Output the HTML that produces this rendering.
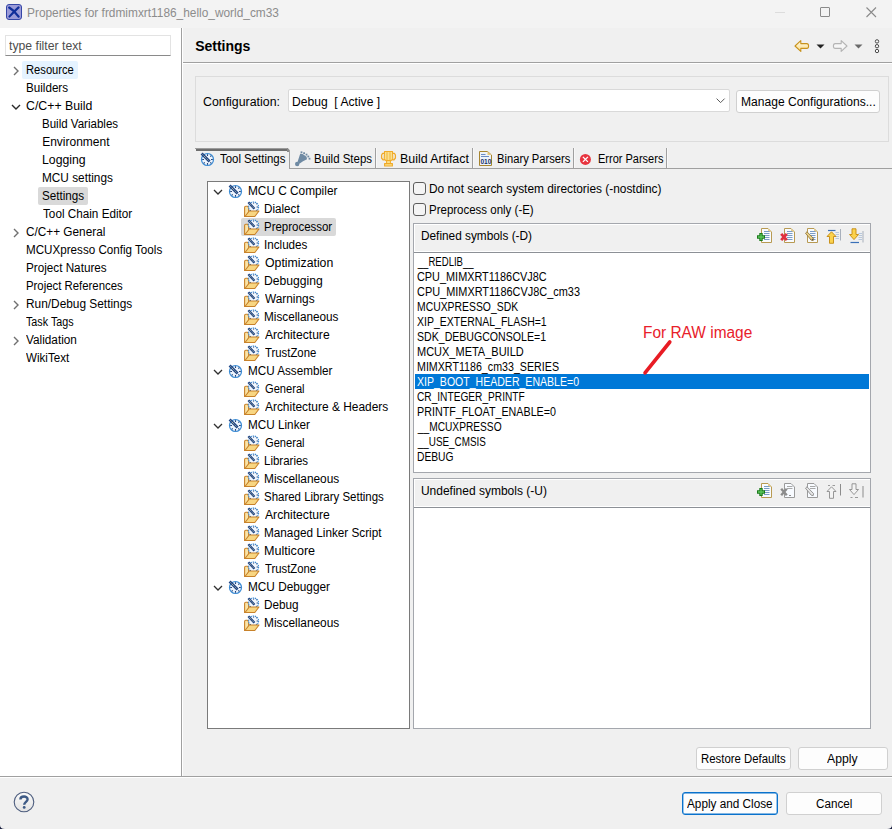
<!DOCTYPE html>
<html><head><meta charset="utf-8"><style>
html,body{margin:0;padding:0;width:892px;height:829px;overflow:hidden;background:#f0f0f0;}
body{position:relative;font-family:"Liberation Sans",sans-serif;font-size:12px;color:#000;}
.t{position:absolute;white-space:pre;line-height:16px;}
.r{position:absolute;}
svg.r{overflow:visible}
</style></head><body>
<div class="r" style="left:0px;top:0px;width:892px;height:28px;background:#f3f3f3"></div>
<svg class="r" style="left:6px;top:4px" width="16" height="16" viewBox="0 0 16 16"><rect x="0.5" y="0.5" width="15" height="15" rx="2.5" fill="#9a9ad8" stroke="#3546a6"/><path d="M3.2 3.6 Q8 6.5 12.6 12.6" fill="none" stroke="#102e9a" stroke-width="2.3" stroke-linecap="round"/><path d="M12.6 3.4 Q8.6 7 3.4 12.6" fill="none" stroke="#102e9a" stroke-width="2.1" stroke-linecap="round"/></svg>
<div class="t" style="left:27.30px;top:5px;transform:scaleX(0.9898);transform-origin:0px 0;color:#8c8c8c;">Properties for frdmimxrt1186_hello_world_cm33</div>
<div class="r" style="left:775px;top:12px;width:10px;height:1px;background:#dcdcdc"></div>
<div class="r" style="left:820px;top:7px;width:10px;height:10px;border:1px solid #8a8a8a;box-sizing:border-box;border-radius:1px"></div>
<svg class="r" style="left:866px;top:7px" width="11" height="11" viewBox="0 0 11 11"><path d="M0.5 0.5 L10 10 M10 0.5 L0.5 10" stroke="#8a8a8a" stroke-width="1.1"/></svg>
<div class="r" style="left:0px;top:28px;width:181px;height:748px;background:#ffffff"></div>
<div class="r" style="left:181px;top:28px;width:1px;height:748px;background:#a0a0a0"></div>
<div class="r" style="left:5px;top:35px;width:166px;height:21px;background:#fff;border:1px solid #e3e3e3;border-bottom:1px solid #8a8a8a;box-sizing:border-box"></div>
<div class="t" style="left:9.00px;top:38px;transform:scaleX(1.0187);transform-origin:0px 0;color:#4d4d4d;">type filter text</div>
<div class="r" style="left:22px;top:61px;width:56px;height:18px;background:#e5f3ff;border-radius:2px"></div>
<div class="r" style="left:38px;top:187px;width:50px;height:18px;background:#d9d9d9;border-radius:2px"></div>
<div class="t" style="left:25.91px;top:62px;transform:scaleX(0.9315);transform-origin:0px 0;">Resource</div>
<svg class="r" style="left:11.5px;top:66.4px" width="8" height="10" viewBox="0 0 8 10"><path d="M2 1 L6 5 L2 9" fill="none" stroke="#707070" stroke-width="1.4"/></svg>
<div class="t" style="left:25.91px;top:80px;transform:scaleX(0.9702);transform-origin:0px 0;">Builders</div>
<div class="t" style="left:25.91px;top:98px;transform:scaleX(1.0262);transform-origin:0px 0;">C/C++ Build</div>
<svg class="r" style="left:10.5px;top:102.5px" width="10" height="8" viewBox="0 0 10 8"><path d="M1 2 L5 6 L9 2" fill="none" stroke="#2a2a2a" stroke-width="1.4"/></svg>
<div class="t" style="left:42.15px;top:116px;transform:scaleX(0.9615);transform-origin:0px 0;">Build Variables</div>
<div class="t" style="left:42.15px;top:134px;">Environment</div>
<div class="t" style="left:42.15px;top:152px;transform:scaleX(1.0219);transform-origin:0px 0;">Logging</div>
<div class="t" style="left:42.15px;top:170px;transform:scaleX(0.9838);transform-origin:0px 0;">MCU settings</div>
<div class="t" style="left:42.15px;top:188px;transform:scaleX(0.9728);transform-origin:0px 0;">Settings</div>
<div class="t" style="left:42.50px;top:206px;transform:scaleX(0.9768);transform-origin:0px 0;">Tool Chain Editor</div>
<div class="t" style="left:26.26px;top:224px;transform:scaleX(0.9826);transform-origin:0px 0;">C/C++ General</div>
<svg class="r" style="left:11.5px;top:228.4px" width="8" height="10" viewBox="0 0 8 10"><path d="M2 1 L6 5 L2 9" fill="none" stroke="#707070" stroke-width="1.4"/></svg>
<div class="t" style="left:25.91px;top:242px;transform:scaleX(0.9695);transform-origin:0px 0;">MCUXpresso Config Tools</div>
<div class="t" style="left:25.91px;top:260px;transform:scaleX(0.9752);transform-origin:0px 0;">Project Natures</div>
<div class="t" style="left:25.91px;top:278px;transform:scaleX(0.9470);transform-origin:0px 0;">Project References</div>
<div class="t" style="left:25.91px;top:296px;transform:scaleX(0.9891);transform-origin:0px 0;">Run/Debug Settings</div>
<svg class="r" style="left:11.5px;top:300.4px" width="8" height="10" viewBox="0 0 8 10"><path d="M2 1 L6 5 L2 9" fill="none" stroke="#707070" stroke-width="1.4"/></svg>
<div class="t" style="left:26.26px;top:314px;transform:scaleX(0.8958);transform-origin:0px 0;">Task Tags</div>
<div class="t" style="left:26.26px;top:332px;transform:scaleX(0.9829);transform-origin:0px 0;">Validation</div>
<svg class="r" style="left:11.5px;top:336.4px" width="8" height="10" viewBox="0 0 8 10"><path d="M2 1 L6 5 L2 9" fill="none" stroke="#707070" stroke-width="1.4"/></svg>
<div class="t" style="left:26.26px;top:350px;transform:scaleX(0.9662);transform-origin:0px 0;">WikiText</div>
<div class="r" style="left:182px;top:28px;width:710px;height:748px;background:#f0f0f0"></div>
<div class="t" style="left:195.15px;top:38px;font-size:14px;font-weight:bold;color:#000;">Settings</div>
<div class="r" style="left:183px;top:62px;width:709px;height:1px;background:#a0a0a0"></div>
<div class="r" style="left:183px;top:63px;width:709px;height:1px;background:#ffffff"></div>
<div class="r" style="left:182px;top:28px;width:1px;height:748px;background:#ffffff"></div>
<svg class="r" style="left:794px;top:39px" width="16" height="14" viewBox="0 0 16 14"><defs><linearGradient id="bk" x1="0" y1="0" x2="0" y2="1"><stop offset="0" stop-color="#fffbe8"/><stop offset="1" stop-color="#fbdc8a"/></linearGradient></defs><path d="M1 7 L6.8 1.6 L6.8 4.6 L12.8 4.6 Q14.6 4.6 14.6 7 Q14.6 9.4 12.8 9.4 L6.8 9.4 L6.8 12.4 Z" fill="url(#bk)" stroke="#c8921c" stroke-width="1.1" stroke-linejoin="round"/></svg>
<svg class="r" style="left:816px;top:44px" width="9" height="5" viewBox="0 0 9 5"><path d="M0.5 0.5 L8.5 0.5 L4.5 4.5 Z" fill="#222"/></svg>
<svg class="r" style="left:832px;top:39px" width="16" height="14" viewBox="0 0 16 14"><path d="M15 7 L9.2 1.6 L9.2 4.6 L3.2 4.6 Q1.4 4.6 1.4 7 Q1.4 9.4 3.2 9.4 L9.2 9.4 L9.2 12.4 Z" fill="#f6f6f6" stroke="#b4b4b4" stroke-width="1.1" stroke-linejoin="round"/></svg>
<svg class="r" style="left:854px;top:44px" width="9" height="5" viewBox="0 0 9 5"><path d="M0.5 0.5 L8.5 0.5 L4.5 4.5 Z" fill="#6a6a6a"/></svg>
<svg class="r" style="left:873px;top:38px" width="8" height="16" viewBox="0 0 8 16"><circle cx="4" cy="3.4" r="1.7" fill="#f8f8f8" stroke="#4a4a4a" stroke-width="1"/><circle cx="4" cy="8.2" r="1.7" fill="#f8f8f8" stroke="#4a4a4a" stroke-width="1"/><circle cx="4" cy="13" r="1.7" fill="#f8f8f8" stroke="#4a4a4a" stroke-width="1"/></svg>
<div class="r" style="left:195px;top:76px;width:694px;height:66px;border:1px solid #dcdcdc;box-sizing:border-box"></div>
<div class="t" style="left:203.15px;top:94px;transform:scaleX(1.0305);transform-origin:0px 0;">Configuration:</div>
<div class="r" style="left:288px;top:89px;width:442px;height:23px;background:#fff;border:1px solid #d9d9d9;box-sizing:border-box;border-radius:2px"></div>
<div class="t" style="left:291.91px;top:94px;transform:scaleX(1.0080);transform-origin:0px 0;">Debug  [ Active ]</div>
<svg class="r" style="left:716px;top:98px" width="10" height="6" viewBox="0 0 10 6"><path d="M0.6 0.6 L4.6 4.6 L8.6 0.6" fill="none" stroke="#5a5a5a" stroke-width="1"/></svg>
<div class="r" style="left:736px;top:90px;width:144px;height:23px;background:#fdfdfd;border:1px solid #d0d0d0;box-sizing:border-box;border-radius:3px"></div>
<div class="t" style="left:740.67px;top:94px;transform:scaleX(1.0051);transform-origin:0px 0;">Manage Configurations...</div>
<div class="r" style="left:289px;top:168px;width:603px;height:1px;background:#a0a0a0"></div>
<div class="r" style="left:195px;top:148px;width:93px;height:1px;background:#9c9c9c"></div>
<div class="r" style="left:196px;top:149px;width:92px;height:2px;background:#6e6e6e"></div>
<svg class="r" style="left:287px;top:148px" width="4" height="4"><path d="M0 0 L0.8 0 L3 2.6 L3 4 L0 4 Z" fill="#8a8a8a"/></svg>
<div class="r" style="left:289px;top:150px;width:1px;height:19px;background:#a0a0a0"></div>
<div class="r" style="left:375px;top:148px;width:1px;height:20px;background:#a0a0a0"></div>
<div class="r" style="left:376px;top:148px;width:1px;height:20px;background:#f8f8f8"></div>
<div class="r" style="left:472px;top:148px;width:1px;height:20px;background:#a0a0a0"></div>
<div class="r" style="left:473px;top:148px;width:1px;height:20px;background:#f8f8f8"></div>
<div class="r" style="left:573px;top:148px;width:1px;height:20px;background:#a0a0a0"></div>
<div class="r" style="left:574px;top:148px;width:1px;height:20px;background:#f8f8f8"></div>
<div class="r" style="left:666px;top:148px;width:1px;height:20px;background:#a0a0a0"></div>
<div class="r" style="left:667px;top:148px;width:1px;height:20px;background:#f8f8f8"></div>
<svg class="r" style="left:200px;top:152px" width="16" height="16" viewBox="0 0 16 16"><circle cx="7.5" cy="7.5" r="6" fill="#eef4fc" stroke="#3b8bd4" stroke-width="1.2"/><path d="M7.5 2.2 L7.5 4" stroke="#24467e" stroke-width="1.1"/><path d="M12.8 7.5 L11 7.5" stroke="#24467e" stroke-width="1.1"/><path d="M7.5 12.8 L7.5 11" stroke="#24467e" stroke-width="1.1"/><path d="M2.2 7.5 L4 7.5" stroke="#24467e" stroke-width="1.1"/><path d="M11.3 3.7 L10.3 4.7" stroke="#24467e" stroke-width="1.1"/><path d="M11.3 11.3 L10.3 10.3" stroke="#24467e" stroke-width="1.1"/><path d="M3.7 11.3 L4.7 10.3" stroke="#24467e" stroke-width="1.1"/><path d="M1.6 1.6 L9.6 9.6" stroke="#1f4585" stroke-width="2.8"/><path d="M2.6 2.6 L8.6 8.6" stroke="#f5e9a8" stroke-width="0.9" stroke-dasharray="1 1"/></svg>
<svg class="r" style="left:294px;top:151px" width="17" height="16" viewBox="0 0 17 16"><g fill="#6f8aa3"><circle cx="3.2" cy="13" r="2.2"/><path d="M3.6 10.8 L6.2 2.8 L8.6 3 L12.6 5.8 L13 8.2 L9 10.2 L5.4 12.8 Z"/><rect x="6.6" y="0.4" width="1.8" height="1.8"/><rect x="9.2" y="1.3" width="1.8" height="1.8"/><rect x="11.6" y="2.7" width="1.8" height="1.8"/><rect x="13.4" y="4.6" width="1.8" height="1.8"/><rect x="14.6" y="6.8" width="1.8" height="1.8"/></g></svg>
<svg class="r" style="left:380px;top:150px" width="17" height="17" viewBox="0 0 17 17"><g stroke="#f0aa28" stroke-linejoin="round"><path d="M4.5 1.5 L12.5 1.5 L12.8 9.2 L11 10.6 L6 10.6 L4.2 9.2 Z" fill="#fbe08c" stroke-width="1.1"/><path d="M7 2.2 L7 10 M10 2.2 L10 10" stroke-width="0.8"/><path d="M4.4 3.4 L2.6 3.4 L1.6 5 L1.6 8 L3 9.8 L4.6 9.8 M12.6 3.4 L14.4 3.4 L15.4 5 L15.4 8 L14 9.8 L12.4 9.8" fill="none" stroke-width="1.3"/><rect x="6.6" y="10.6" width="3.8" height="3" fill="#fbe08c" stroke-width="1"/><rect x="4.6" y="13.6" width="7.8" height="2.4" fill="#fbe08c" stroke-width="1.1"/></g></svg>
<svg class="r" style="left:479px;top:151px" width="15" height="16" viewBox="0 0 15 16"><path d="M0.5 0.5 L8.5 0.5 L12.5 4 L12.5 14.5 L0.5 14.5 Z" fill="#eef3fa" stroke="#a7852f" stroke-width="1"/><path d="M8.5 0.5 L8.5 4 L12.5 4 Z" fill="#e6c77a"/><path d="M2 3.5 L6.5 3.5 M2 5.5 L10 5.5" stroke="#6b8cc4" stroke-width="1"/><text x="1.4" y="13.2" font-family="Liberation Sans" font-weight="bold" font-size="6.6" fill="#15306a" transform="scale(1,1.15)" transform-origin="0 13.2">010</text></svg>
<svg class="r" style="left:579px;top:153px" width="13" height="13" viewBox="0 0 13 13"><circle cx="6.4" cy="6.4" r="5.5" fill="#e8343f"/><path d="M3.9 3.9 L8.9 8.9 M8.9 3.9 L3.9 8.9" stroke="#fff" stroke-width="1.3"/></svg>
<div class="t" style="left:219.87px;top:151px;transform:scaleX(0.9509);transform-origin:0px 0;">Tool Settings</div>
<div class="t" style="left:313.91px;top:151px;transform:scaleX(0.9559);transform-origin:0px 0;">Build Steps</div>
<div class="t" style="left:399.78px;top:151px;transform:scaleX(1.0331);transform-origin:0px 0;">Build Artifact</div>
<div class="t" style="left:497.04px;top:151px;transform:scaleX(0.9329);transform-origin:0px 0;">Binary Parsers</div>
<div class="t" style="left:597.91px;top:151px;transform:scaleX(0.9168);transform-origin:0px 0;">Error Parsers</div>
<div class="r" style="left:207px;top:181px;width:203px;height:548px;background:#fff;border:1px solid #7a7a7a;box-sizing:border-box"></div>
<div class="r" style="left:241px;top:218px;width:95px;height:18px;background:#d9d9d9;border-radius:2px"></div>
<div class="t" style="left:248.04px;top:183px;transform:scaleX(0.9859);transform-origin:0px 0;">MCU C Compiler</div>
<svg class="r" style="left:213px;top:188px" width="10" height="8" viewBox="0 0 10 8"><path d="M1 2 L5 6 L9 2" fill="none" stroke="#303030" stroke-width="1.3"/></svg>
<svg class="r" style="left:228px;top:184px" width="16" height="16" viewBox="0 0 16 16"><circle cx="7.5" cy="7.5" r="6" fill="#eef4fc" stroke="#3b8bd4" stroke-width="1.2"/><path d="M7.5 2.2 L7.5 4" stroke="#24467e" stroke-width="1.1"/><path d="M12.8 7.5 L11 7.5" stroke="#24467e" stroke-width="1.1"/><path d="M7.5 12.8 L7.5 11" stroke="#24467e" stroke-width="1.1"/><path d="M2.2 7.5 L4 7.5" stroke="#24467e" stroke-width="1.1"/><path d="M11.3 3.7 L10.3 4.7" stroke="#24467e" stroke-width="1.1"/><path d="M11.3 11.3 L10.3 10.3" stroke="#24467e" stroke-width="1.1"/><path d="M3.7 11.3 L4.7 10.3" stroke="#24467e" stroke-width="1.1"/><path d="M1.6 1.6 L9.6 9.6" stroke="#1f4585" stroke-width="2.8"/><path d="M2.6 2.6 L8.6 8.6" stroke="#f5e9a8" stroke-width="0.9" stroke-dasharray="1 1"/></svg>
<div class="t" style="left:264.15px;top:201px;transform:scaleX(0.9719);transform-origin:0px 0;">Dialect</div>
<svg class="r" style="left:244px;top:200px" width="16" height="18" viewBox="0 0 16 18"><path d="M0.6 16.4 L0.6 7.4 Q0.6 6.2 1.8 6.2 L3.4 6.2 L4.6 7.6 L4.6 16.4 Z" fill="#fbe4a6" stroke="#c8822a" stroke-width="1.1"/><circle cx="9.6" cy="7" r="5" fill="#f2f7fd" stroke="#3b8bd4" stroke-width="1.1" stroke-dasharray="1.4 0.8"/><path d="M12.6 7 L14 7 M9.6 2.6 L9.6 3.6 M7 10 L6.2 10.8 M12.2 10 L13 10.8 M12.2 4.2 L13 3.4" stroke="#24467e" stroke-width="1"/><path d="M4.4 2.2 L10.4 8.8" stroke="#1f4585" stroke-width="2.4"/><path d="M5.2 3.1 L9.6 7.9" stroke="#f5e9a8" stroke-width="0.8" stroke-dasharray="0.9 0.9"/><path d="M1 16.5 L5.2 11 L15 11 L10.8 16.5 Z" fill="#f8d682" stroke="#c8822a" stroke-width="1.1" stroke-linejoin="round"/></svg>
<div class="t" style="left:264.15px;top:219px;transform:scaleX(0.9556);transform-origin:0px 0;">Preprocessor</div>
<svg class="r" style="left:244px;top:218px" width="16" height="18" viewBox="0 0 16 18"><path d="M0.6 16.4 L0.6 7.4 Q0.6 6.2 1.8 6.2 L3.4 6.2 L4.6 7.6 L4.6 16.4 Z" fill="#fbe4a6" stroke="#c8822a" stroke-width="1.1"/><circle cx="9.6" cy="7" r="5" fill="#f2f7fd" stroke="#3b8bd4" stroke-width="1.1" stroke-dasharray="1.4 0.8"/><path d="M12.6 7 L14 7 M9.6 2.6 L9.6 3.6 M7 10 L6.2 10.8 M12.2 10 L13 10.8 M12.2 4.2 L13 3.4" stroke="#24467e" stroke-width="1"/><path d="M4.4 2.2 L10.4 8.8" stroke="#1f4585" stroke-width="2.4"/><path d="M5.2 3.1 L9.6 7.9" stroke="#f5e9a8" stroke-width="0.8" stroke-dasharray="0.9 0.9"/><path d="M1 16.5 L5.2 11 L15 11 L10.8 16.5 Z" fill="#f8d682" stroke="#c8822a" stroke-width="1.1" stroke-linejoin="round"/></svg>
<div class="t" style="left:264.15px;top:237px;transform:scaleX(0.9711);transform-origin:0px 0;">Includes</div>
<svg class="r" style="left:244px;top:236px" width="16" height="18" viewBox="0 0 16 18"><path d="M0.6 16.4 L0.6 7.4 Q0.6 6.2 1.8 6.2 L3.4 6.2 L4.6 7.6 L4.6 16.4 Z" fill="#fbe4a6" stroke="#c8822a" stroke-width="1.1"/><circle cx="9.6" cy="7" r="5" fill="#f2f7fd" stroke="#3b8bd4" stroke-width="1.1" stroke-dasharray="1.4 0.8"/><path d="M12.6 7 L14 7 M9.6 2.6 L9.6 3.6 M7 10 L6.2 10.8 M12.2 10 L13 10.8 M12.2 4.2 L13 3.4" stroke="#24467e" stroke-width="1"/><path d="M4.4 2.2 L10.4 8.8" stroke="#1f4585" stroke-width="2.4"/><path d="M5.2 3.1 L9.6 7.9" stroke="#f5e9a8" stroke-width="0.8" stroke-dasharray="0.9 0.9"/><path d="M1 16.5 L5.2 11 L15 11 L10.8 16.5 Z" fill="#f8d682" stroke="#c8822a" stroke-width="1.1" stroke-linejoin="round"/></svg>
<div class="t" style="left:264.50px;top:255px;transform:scaleX(1.0237);transform-origin:0px 0;">Optimization</div>
<svg class="r" style="left:244px;top:254px" width="16" height="18" viewBox="0 0 16 18"><path d="M0.6 16.4 L0.6 7.4 Q0.6 6.2 1.8 6.2 L3.4 6.2 L4.6 7.6 L4.6 16.4 Z" fill="#fbe4a6" stroke="#c8822a" stroke-width="1.1"/><circle cx="9.6" cy="7" r="5" fill="#f2f7fd" stroke="#3b8bd4" stroke-width="1.1" stroke-dasharray="1.4 0.8"/><path d="M12.6 7 L14 7 M9.6 2.6 L9.6 3.6 M7 10 L6.2 10.8 M12.2 10 L13 10.8 M12.2 4.2 L13 3.4" stroke="#24467e" stroke-width="1"/><path d="M4.4 2.2 L10.4 8.8" stroke="#1f4585" stroke-width="2.4"/><path d="M5.2 3.1 L9.6 7.9" stroke="#f5e9a8" stroke-width="0.8" stroke-dasharray="0.9 0.9"/><path d="M1 16.5 L5.2 11 L15 11 L10.8 16.5 Z" fill="#f8d682" stroke="#c8822a" stroke-width="1.1" stroke-linejoin="round"/></svg>
<div class="t" style="left:264.15px;top:273px;transform:scaleX(1.0121);transform-origin:0px 0;">Debugging</div>
<svg class="r" style="left:244px;top:272px" width="16" height="18" viewBox="0 0 16 18"><path d="M0.6 16.4 L0.6 7.4 Q0.6 6.2 1.8 6.2 L3.4 6.2 L4.6 7.6 L4.6 16.4 Z" fill="#fbe4a6" stroke="#c8822a" stroke-width="1.1"/><circle cx="9.6" cy="7" r="5" fill="#f2f7fd" stroke="#3b8bd4" stroke-width="1.1" stroke-dasharray="1.4 0.8"/><path d="M12.6 7 L14 7 M9.6 2.6 L9.6 3.6 M7 10 L6.2 10.8 M12.2 10 L13 10.8 M12.2 4.2 L13 3.4" stroke="#24467e" stroke-width="1"/><path d="M4.4 2.2 L10.4 8.8" stroke="#1f4585" stroke-width="2.4"/><path d="M5.2 3.1 L9.6 7.9" stroke="#f5e9a8" stroke-width="0.8" stroke-dasharray="0.9 0.9"/><path d="M1 16.5 L5.2 11 L15 11 L10.8 16.5 Z" fill="#f8d682" stroke="#c8822a" stroke-width="1.1" stroke-linejoin="round"/></svg>
<div class="t" style="left:264.50px;top:291px;transform:scaleX(0.9874);transform-origin:0px 0;">Warnings</div>
<svg class="r" style="left:244px;top:290px" width="16" height="18" viewBox="0 0 16 18"><path d="M0.6 16.4 L0.6 7.4 Q0.6 6.2 1.8 6.2 L3.4 6.2 L4.6 7.6 L4.6 16.4 Z" fill="#fbe4a6" stroke="#c8822a" stroke-width="1.1"/><circle cx="9.6" cy="7" r="5" fill="#f2f7fd" stroke="#3b8bd4" stroke-width="1.1" stroke-dasharray="1.4 0.8"/><path d="M12.6 7 L14 7 M9.6 2.6 L9.6 3.6 M7 10 L6.2 10.8 M12.2 10 L13 10.8 M12.2 4.2 L13 3.4" stroke="#24467e" stroke-width="1"/><path d="M4.4 2.2 L10.4 8.8" stroke="#1f4585" stroke-width="2.4"/><path d="M5.2 3.1 L9.6 7.9" stroke="#f5e9a8" stroke-width="0.8" stroke-dasharray="0.9 0.9"/><path d="M1 16.5 L5.2 11 L15 11 L10.8 16.5 Z" fill="#f8d682" stroke="#c8822a" stroke-width="1.1" stroke-linejoin="round"/></svg>
<div class="t" style="left:264.15px;top:309px;transform:scaleX(0.9797);transform-origin:0px 0;">Miscellaneous</div>
<svg class="r" style="left:244px;top:308px" width="16" height="18" viewBox="0 0 16 18"><path d="M0.6 16.4 L0.6 7.4 Q0.6 6.2 1.8 6.2 L3.4 6.2 L4.6 7.6 L4.6 16.4 Z" fill="#fbe4a6" stroke="#c8822a" stroke-width="1.1"/><circle cx="9.6" cy="7" r="5" fill="#f2f7fd" stroke="#3b8bd4" stroke-width="1.1" stroke-dasharray="1.4 0.8"/><path d="M12.6 7 L14 7 M9.6 2.6 L9.6 3.6 M7 10 L6.2 10.8 M12.2 10 L13 10.8 M12.2 4.2 L13 3.4" stroke="#24467e" stroke-width="1"/><path d="M4.4 2.2 L10.4 8.8" stroke="#1f4585" stroke-width="2.4"/><path d="M5.2 3.1 L9.6 7.9" stroke="#f5e9a8" stroke-width="0.8" stroke-dasharray="0.9 0.9"/><path d="M1 16.5 L5.2 11 L15 11 L10.8 16.5 Z" fill="#f8d682" stroke="#c8822a" stroke-width="1.1" stroke-linejoin="round"/></svg>
<div class="t" style="left:264.50px;top:327px;transform:scaleX(1.0095);transform-origin:0px 0;">Architecture</div>
<svg class="r" style="left:244px;top:326px" width="16" height="18" viewBox="0 0 16 18"><path d="M0.6 16.4 L0.6 7.4 Q0.6 6.2 1.8 6.2 L3.4 6.2 L4.6 7.6 L4.6 16.4 Z" fill="#fbe4a6" stroke="#c8822a" stroke-width="1.1"/><circle cx="9.6" cy="7" r="5" fill="#f2f7fd" stroke="#3b8bd4" stroke-width="1.1" stroke-dasharray="1.4 0.8"/><path d="M12.6 7 L14 7 M9.6 2.6 L9.6 3.6 M7 10 L6.2 10.8 M12.2 10 L13 10.8 M12.2 4.2 L13 3.4" stroke="#24467e" stroke-width="1"/><path d="M4.4 2.2 L10.4 8.8" stroke="#1f4585" stroke-width="2.4"/><path d="M5.2 3.1 L9.6 7.9" stroke="#f5e9a8" stroke-width="0.8" stroke-dasharray="0.9 0.9"/><path d="M1 16.5 L5.2 11 L15 11 L10.8 16.5 Z" fill="#f8d682" stroke="#c8822a" stroke-width="1.1" stroke-linejoin="round"/></svg>
<div class="t" style="left:264.50px;top:345px;transform:scaleX(0.9447);transform-origin:0px 0;">TrustZone</div>
<svg class="r" style="left:244px;top:344px" width="16" height="18" viewBox="0 0 16 18"><path d="M0.6 16.4 L0.6 7.4 Q0.6 6.2 1.8 6.2 L3.4 6.2 L4.6 7.6 L4.6 16.4 Z" fill="#fbe4a6" stroke="#c8822a" stroke-width="1.1"/><circle cx="9.6" cy="7" r="5" fill="#f2f7fd" stroke="#3b8bd4" stroke-width="1.1" stroke-dasharray="1.4 0.8"/><path d="M12.6 7 L14 7 M9.6 2.6 L9.6 3.6 M7 10 L6.2 10.8 M12.2 10 L13 10.8 M12.2 4.2 L13 3.4" stroke="#24467e" stroke-width="1"/><path d="M4.4 2.2 L10.4 8.8" stroke="#1f4585" stroke-width="2.4"/><path d="M5.2 3.1 L9.6 7.9" stroke="#f5e9a8" stroke-width="0.8" stroke-dasharray="0.9 0.9"/><path d="M1 16.5 L5.2 11 L15 11 L10.8 16.5 Z" fill="#f8d682" stroke="#c8822a" stroke-width="1.1" stroke-linejoin="round"/></svg>
<div class="t" style="left:248.04px;top:363px;transform:scaleX(0.9736);transform-origin:0px 0;">MCU Assembler</div>
<svg class="r" style="left:213px;top:368px" width="10" height="8" viewBox="0 0 10 8"><path d="M1 2 L5 6 L9 2" fill="none" stroke="#303030" stroke-width="1.3"/></svg>
<svg class="r" style="left:228px;top:364px" width="16" height="16" viewBox="0 0 16 16"><circle cx="7.5" cy="7.5" r="6" fill="#eef4fc" stroke="#3b8bd4" stroke-width="1.2"/><path d="M7.5 2.2 L7.5 4" stroke="#24467e" stroke-width="1.1"/><path d="M12.8 7.5 L11 7.5" stroke="#24467e" stroke-width="1.1"/><path d="M7.5 12.8 L7.5 11" stroke="#24467e" stroke-width="1.1"/><path d="M2.2 7.5 L4 7.5" stroke="#24467e" stroke-width="1.1"/><path d="M11.3 3.7 L10.3 4.7" stroke="#24467e" stroke-width="1.1"/><path d="M11.3 11.3 L10.3 10.3" stroke="#24467e" stroke-width="1.1"/><path d="M3.7 11.3 L4.7 10.3" stroke="#24467e" stroke-width="1.1"/><path d="M1.6 1.6 L9.6 9.6" stroke="#1f4585" stroke-width="2.8"/><path d="M2.6 2.6 L8.6 8.6" stroke="#f5e9a8" stroke-width="0.9" stroke-dasharray="1 1"/></svg>
<div class="t" style="left:264.50px;top:381px;transform:scaleX(0.9263);transform-origin:0px 0;">General</div>
<svg class="r" style="left:244px;top:380px" width="16" height="18" viewBox="0 0 16 18"><path d="M0.6 16.4 L0.6 7.4 Q0.6 6.2 1.8 6.2 L3.4 6.2 L4.6 7.6 L4.6 16.4 Z" fill="#fbe4a6" stroke="#c8822a" stroke-width="1.1"/><circle cx="9.6" cy="7" r="5" fill="#f2f7fd" stroke="#3b8bd4" stroke-width="1.1" stroke-dasharray="1.4 0.8"/><path d="M12.6 7 L14 7 M9.6 2.6 L9.6 3.6 M7 10 L6.2 10.8 M12.2 10 L13 10.8 M12.2 4.2 L13 3.4" stroke="#24467e" stroke-width="1"/><path d="M4.4 2.2 L10.4 8.8" stroke="#1f4585" stroke-width="2.4"/><path d="M5.2 3.1 L9.6 7.9" stroke="#f5e9a8" stroke-width="0.8" stroke-dasharray="0.9 0.9"/><path d="M1 16.5 L5.2 11 L15 11 L10.8 16.5 Z" fill="#f8d682" stroke="#c8822a" stroke-width="1.1" stroke-linejoin="round"/></svg>
<div class="t" style="left:264.50px;top:399px;transform:scaleX(0.9930);transform-origin:0px 0;">Architecture &amp; Headers</div>
<svg class="r" style="left:244px;top:398px" width="16" height="18" viewBox="0 0 16 18"><path d="M0.6 16.4 L0.6 7.4 Q0.6 6.2 1.8 6.2 L3.4 6.2 L4.6 7.6 L4.6 16.4 Z" fill="#fbe4a6" stroke="#c8822a" stroke-width="1.1"/><circle cx="9.6" cy="7" r="5" fill="#f2f7fd" stroke="#3b8bd4" stroke-width="1.1" stroke-dasharray="1.4 0.8"/><path d="M12.6 7 L14 7 M9.6 2.6 L9.6 3.6 M7 10 L6.2 10.8 M12.2 10 L13 10.8 M12.2 4.2 L13 3.4" stroke="#24467e" stroke-width="1"/><path d="M4.4 2.2 L10.4 8.8" stroke="#1f4585" stroke-width="2.4"/><path d="M5.2 3.1 L9.6 7.9" stroke="#f5e9a8" stroke-width="0.8" stroke-dasharray="0.9 0.9"/><path d="M1 16.5 L5.2 11 L15 11 L10.8 16.5 Z" fill="#f8d682" stroke="#c8822a" stroke-width="1.1" stroke-linejoin="round"/></svg>
<div class="t" style="left:248.04px;top:417px;transform:scaleX(0.9779);transform-origin:0px 0;">MCU Linker</div>
<svg class="r" style="left:213px;top:422px" width="10" height="8" viewBox="0 0 10 8"><path d="M1 2 L5 6 L9 2" fill="none" stroke="#303030" stroke-width="1.3"/></svg>
<svg class="r" style="left:228px;top:418px" width="16" height="16" viewBox="0 0 16 16"><circle cx="7.5" cy="7.5" r="6" fill="#eef4fc" stroke="#3b8bd4" stroke-width="1.2"/><path d="M7.5 2.2 L7.5 4" stroke="#24467e" stroke-width="1.1"/><path d="M12.8 7.5 L11 7.5" stroke="#24467e" stroke-width="1.1"/><path d="M7.5 12.8 L7.5 11" stroke="#24467e" stroke-width="1.1"/><path d="M2.2 7.5 L4 7.5" stroke="#24467e" stroke-width="1.1"/><path d="M11.3 3.7 L10.3 4.7" stroke="#24467e" stroke-width="1.1"/><path d="M11.3 11.3 L10.3 10.3" stroke="#24467e" stroke-width="1.1"/><path d="M3.7 11.3 L4.7 10.3" stroke="#24467e" stroke-width="1.1"/><path d="M1.6 1.6 L9.6 9.6" stroke="#1f4585" stroke-width="2.8"/><path d="M2.6 2.6 L8.6 8.6" stroke="#f5e9a8" stroke-width="0.9" stroke-dasharray="1 1"/></svg>
<div class="t" style="left:264.50px;top:435px;transform:scaleX(0.9263);transform-origin:0px 0;">General</div>
<svg class="r" style="left:244px;top:434px" width="16" height="18" viewBox="0 0 16 18"><path d="M0.6 16.4 L0.6 7.4 Q0.6 6.2 1.8 6.2 L3.4 6.2 L4.6 7.6 L4.6 16.4 Z" fill="#fbe4a6" stroke="#c8822a" stroke-width="1.1"/><circle cx="9.6" cy="7" r="5" fill="#f2f7fd" stroke="#3b8bd4" stroke-width="1.1" stroke-dasharray="1.4 0.8"/><path d="M12.6 7 L14 7 M9.6 2.6 L9.6 3.6 M7 10 L6.2 10.8 M12.2 10 L13 10.8 M12.2 4.2 L13 3.4" stroke="#24467e" stroke-width="1"/><path d="M4.4 2.2 L10.4 8.8" stroke="#1f4585" stroke-width="2.4"/><path d="M5.2 3.1 L9.6 7.9" stroke="#f5e9a8" stroke-width="0.8" stroke-dasharray="0.9 0.9"/><path d="M1 16.5 L5.2 11 L15 11 L10.8 16.5 Z" fill="#f8d682" stroke="#c8822a" stroke-width="1.1" stroke-linejoin="round"/></svg>
<div class="t" style="left:264.15px;top:453px;transform:scaleX(0.9580);transform-origin:0px 0;">Libraries</div>
<svg class="r" style="left:244px;top:452px" width="16" height="18" viewBox="0 0 16 18"><path d="M0.6 16.4 L0.6 7.4 Q0.6 6.2 1.8 6.2 L3.4 6.2 L4.6 7.6 L4.6 16.4 Z" fill="#fbe4a6" stroke="#c8822a" stroke-width="1.1"/><circle cx="9.6" cy="7" r="5" fill="#f2f7fd" stroke="#3b8bd4" stroke-width="1.1" stroke-dasharray="1.4 0.8"/><path d="M12.6 7 L14 7 M9.6 2.6 L9.6 3.6 M7 10 L6.2 10.8 M12.2 10 L13 10.8 M12.2 4.2 L13 3.4" stroke="#24467e" stroke-width="1"/><path d="M4.4 2.2 L10.4 8.8" stroke="#1f4585" stroke-width="2.4"/><path d="M5.2 3.1 L9.6 7.9" stroke="#f5e9a8" stroke-width="0.8" stroke-dasharray="0.9 0.9"/><path d="M1 16.5 L5.2 11 L15 11 L10.8 16.5 Z" fill="#f8d682" stroke="#c8822a" stroke-width="1.1" stroke-linejoin="round"/></svg>
<div class="t" style="left:264.15px;top:471px;transform:scaleX(0.9895);transform-origin:0px 0;">Miscellaneous</div>
<svg class="r" style="left:244px;top:470px" width="16" height="18" viewBox="0 0 16 18"><path d="M0.6 16.4 L0.6 7.4 Q0.6 6.2 1.8 6.2 L3.4 6.2 L4.6 7.6 L4.6 16.4 Z" fill="#fbe4a6" stroke="#c8822a" stroke-width="1.1"/><circle cx="9.6" cy="7" r="5" fill="#f2f7fd" stroke="#3b8bd4" stroke-width="1.1" stroke-dasharray="1.4 0.8"/><path d="M12.6 7 L14 7 M9.6 2.6 L9.6 3.6 M7 10 L6.2 10.8 M12.2 10 L13 10.8 M12.2 4.2 L13 3.4" stroke="#24467e" stroke-width="1"/><path d="M4.4 2.2 L10.4 8.8" stroke="#1f4585" stroke-width="2.4"/><path d="M5.2 3.1 L9.6 7.9" stroke="#f5e9a8" stroke-width="0.8" stroke-dasharray="0.9 0.9"/><path d="M1 16.5 L5.2 11 L15 11 L10.8 16.5 Z" fill="#f8d682" stroke="#c8822a" stroke-width="1.1" stroke-linejoin="round"/></svg>
<div class="t" style="left:264.15px;top:489px;transform:scaleX(0.9558);transform-origin:0px 0;">Shared Library Settings</div>
<svg class="r" style="left:244px;top:488px" width="16" height="18" viewBox="0 0 16 18"><path d="M0.6 16.4 L0.6 7.4 Q0.6 6.2 1.8 6.2 L3.4 6.2 L4.6 7.6 L4.6 16.4 Z" fill="#fbe4a6" stroke="#c8822a" stroke-width="1.1"/><circle cx="9.6" cy="7" r="5" fill="#f2f7fd" stroke="#3b8bd4" stroke-width="1.1" stroke-dasharray="1.4 0.8"/><path d="M12.6 7 L14 7 M9.6 2.6 L9.6 3.6 M7 10 L6.2 10.8 M12.2 10 L13 10.8 M12.2 4.2 L13 3.4" stroke="#24467e" stroke-width="1"/><path d="M4.4 2.2 L10.4 8.8" stroke="#1f4585" stroke-width="2.4"/><path d="M5.2 3.1 L9.6 7.9" stroke="#f5e9a8" stroke-width="0.8" stroke-dasharray="0.9 0.9"/><path d="M1 16.5 L5.2 11 L15 11 L10.8 16.5 Z" fill="#f8d682" stroke="#c8822a" stroke-width="1.1" stroke-linejoin="round"/></svg>
<div class="t" style="left:264.50px;top:507px;transform:scaleX(1.0133);transform-origin:0px 0;">Architecture</div>
<svg class="r" style="left:244px;top:506px" width="16" height="18" viewBox="0 0 16 18"><path d="M0.6 16.4 L0.6 7.4 Q0.6 6.2 1.8 6.2 L3.4 6.2 L4.6 7.6 L4.6 16.4 Z" fill="#fbe4a6" stroke="#c8822a" stroke-width="1.1"/><circle cx="9.6" cy="7" r="5" fill="#f2f7fd" stroke="#3b8bd4" stroke-width="1.1" stroke-dasharray="1.4 0.8"/><path d="M12.6 7 L14 7 M9.6 2.6 L9.6 3.6 M7 10 L6.2 10.8 M12.2 10 L13 10.8 M12.2 4.2 L13 3.4" stroke="#24467e" stroke-width="1"/><path d="M4.4 2.2 L10.4 8.8" stroke="#1f4585" stroke-width="2.4"/><path d="M5.2 3.1 L9.6 7.9" stroke="#f5e9a8" stroke-width="0.8" stroke-dasharray="0.9 0.9"/><path d="M1 16.5 L5.2 11 L15 11 L10.8 16.5 Z" fill="#f8d682" stroke="#c8822a" stroke-width="1.1" stroke-linejoin="round"/></svg>
<div class="t" style="left:264.15px;top:525px;transform:scaleX(0.9787);transform-origin:0px 0;">Managed Linker Script</div>
<svg class="r" style="left:244px;top:524px" width="16" height="18" viewBox="0 0 16 18"><path d="M0.6 16.4 L0.6 7.4 Q0.6 6.2 1.8 6.2 L3.4 6.2 L4.6 7.6 L4.6 16.4 Z" fill="#fbe4a6" stroke="#c8822a" stroke-width="1.1"/><circle cx="9.6" cy="7" r="5" fill="#f2f7fd" stroke="#3b8bd4" stroke-width="1.1" stroke-dasharray="1.4 0.8"/><path d="M12.6 7 L14 7 M9.6 2.6 L9.6 3.6 M7 10 L6.2 10.8 M12.2 10 L13 10.8 M12.2 4.2 L13 3.4" stroke="#24467e" stroke-width="1"/><path d="M4.4 2.2 L10.4 8.8" stroke="#1f4585" stroke-width="2.4"/><path d="M5.2 3.1 L9.6 7.9" stroke="#f5e9a8" stroke-width="0.8" stroke-dasharray="0.9 0.9"/><path d="M1 16.5 L5.2 11 L15 11 L10.8 16.5 Z" fill="#f8d682" stroke="#c8822a" stroke-width="1.1" stroke-linejoin="round"/></svg>
<div class="t" style="left:264.15px;top:543px;transform:scaleX(1.0498);transform-origin:0px 0;">Multicore</div>
<svg class="r" style="left:244px;top:542px" width="16" height="18" viewBox="0 0 16 18"><path d="M0.6 16.4 L0.6 7.4 Q0.6 6.2 1.8 6.2 L3.4 6.2 L4.6 7.6 L4.6 16.4 Z" fill="#fbe4a6" stroke="#c8822a" stroke-width="1.1"/><circle cx="9.6" cy="7" r="5" fill="#f2f7fd" stroke="#3b8bd4" stroke-width="1.1" stroke-dasharray="1.4 0.8"/><path d="M12.6 7 L14 7 M9.6 2.6 L9.6 3.6 M7 10 L6.2 10.8 M12.2 10 L13 10.8 M12.2 4.2 L13 3.4" stroke="#24467e" stroke-width="1"/><path d="M4.4 2.2 L10.4 8.8" stroke="#1f4585" stroke-width="2.4"/><path d="M5.2 3.1 L9.6 7.9" stroke="#f5e9a8" stroke-width="0.8" stroke-dasharray="0.9 0.9"/><path d="M1 16.5 L5.2 11 L15 11 L10.8 16.5 Z" fill="#f8d682" stroke="#c8822a" stroke-width="1.1" stroke-linejoin="round"/></svg>
<div class="t" style="left:264.50px;top:561px;transform:scaleX(0.9427);transform-origin:0px 0;">TrustZone</div>
<svg class="r" style="left:244px;top:560px" width="16" height="18" viewBox="0 0 16 18"><path d="M0.6 16.4 L0.6 7.4 Q0.6 6.2 1.8 6.2 L3.4 6.2 L4.6 7.6 L4.6 16.4 Z" fill="#fbe4a6" stroke="#c8822a" stroke-width="1.1"/><circle cx="9.6" cy="7" r="5" fill="#f2f7fd" stroke="#3b8bd4" stroke-width="1.1" stroke-dasharray="1.4 0.8"/><path d="M12.6 7 L14 7 M9.6 2.6 L9.6 3.6 M7 10 L6.2 10.8 M12.2 10 L13 10.8 M12.2 4.2 L13 3.4" stroke="#24467e" stroke-width="1"/><path d="M4.4 2.2 L10.4 8.8" stroke="#1f4585" stroke-width="2.4"/><path d="M5.2 3.1 L9.6 7.9" stroke="#f5e9a8" stroke-width="0.8" stroke-dasharray="0.9 0.9"/><path d="M1 16.5 L5.2 11 L15 11 L10.8 16.5 Z" fill="#f8d682" stroke="#c8822a" stroke-width="1.1" stroke-linejoin="round"/></svg>
<div class="t" style="left:248.04px;top:579px;transform:scaleX(0.9833);transform-origin:0px 0;">MCU Debugger</div>
<svg class="r" style="left:213px;top:584px" width="10" height="8" viewBox="0 0 10 8"><path d="M1 2 L5 6 L9 2" fill="none" stroke="#303030" stroke-width="1.3"/></svg>
<svg class="r" style="left:228px;top:580px" width="16" height="16" viewBox="0 0 16 16"><circle cx="7.5" cy="7.5" r="6" fill="#eef4fc" stroke="#3b8bd4" stroke-width="1.2"/><path d="M7.5 2.2 L7.5 4" stroke="#24467e" stroke-width="1.1"/><path d="M12.8 7.5 L11 7.5" stroke="#24467e" stroke-width="1.1"/><path d="M7.5 12.8 L7.5 11" stroke="#24467e" stroke-width="1.1"/><path d="M2.2 7.5 L4 7.5" stroke="#24467e" stroke-width="1.1"/><path d="M11.3 3.7 L10.3 4.7" stroke="#24467e" stroke-width="1.1"/><path d="M11.3 11.3 L10.3 10.3" stroke="#24467e" stroke-width="1.1"/><path d="M3.7 11.3 L4.7 10.3" stroke="#24467e" stroke-width="1.1"/><path d="M1.6 1.6 L9.6 9.6" stroke="#1f4585" stroke-width="2.8"/><path d="M2.6 2.6 L8.6 8.6" stroke="#f5e9a8" stroke-width="0.9" stroke-dasharray="1 1"/></svg>
<div class="t" style="left:264.15px;top:597px;transform:scaleX(0.9777);transform-origin:0px 0;">Debug</div>
<svg class="r" style="left:244px;top:596px" width="16" height="18" viewBox="0 0 16 18"><path d="M0.6 16.4 L0.6 7.4 Q0.6 6.2 1.8 6.2 L3.4 6.2 L4.6 7.6 L4.6 16.4 Z" fill="#fbe4a6" stroke="#c8822a" stroke-width="1.1"/><circle cx="9.6" cy="7" r="5" fill="#f2f7fd" stroke="#3b8bd4" stroke-width="1.1" stroke-dasharray="1.4 0.8"/><path d="M12.6 7 L14 7 M9.6 2.6 L9.6 3.6 M7 10 L6.2 10.8 M12.2 10 L13 10.8 M12.2 4.2 L13 3.4" stroke="#24467e" stroke-width="1"/><path d="M4.4 2.2 L10.4 8.8" stroke="#1f4585" stroke-width="2.4"/><path d="M5.2 3.1 L9.6 7.9" stroke="#f5e9a8" stroke-width="0.8" stroke-dasharray="0.9 0.9"/><path d="M1 16.5 L5.2 11 L15 11 L10.8 16.5 Z" fill="#f8d682" stroke="#c8822a" stroke-width="1.1" stroke-linejoin="round"/></svg>
<div class="t" style="left:264.15px;top:615px;transform:scaleX(0.9895);transform-origin:0px 0;">Miscellaneous</div>
<svg class="r" style="left:244px;top:614px" width="16" height="18" viewBox="0 0 16 18"><path d="M0.6 16.4 L0.6 7.4 Q0.6 6.2 1.8 6.2 L3.4 6.2 L4.6 7.6 L4.6 16.4 Z" fill="#fbe4a6" stroke="#c8822a" stroke-width="1.1"/><circle cx="9.6" cy="7" r="5" fill="#f2f7fd" stroke="#3b8bd4" stroke-width="1.1" stroke-dasharray="1.4 0.8"/><path d="M12.6 7 L14 7 M9.6 2.6 L9.6 3.6 M7 10 L6.2 10.8 M12.2 10 L13 10.8 M12.2 4.2 L13 3.4" stroke="#24467e" stroke-width="1"/><path d="M4.4 2.2 L10.4 8.8" stroke="#1f4585" stroke-width="2.4"/><path d="M5.2 3.1 L9.6 7.9" stroke="#f5e9a8" stroke-width="0.8" stroke-dasharray="0.9 0.9"/><path d="M1 16.5 L5.2 11 L15 11 L10.8 16.5 Z" fill="#f8d682" stroke="#c8822a" stroke-width="1.1" stroke-linejoin="round"/></svg>
<div class="r" style="left:413px;top:182px;width:13px;height:13px;background:#f4f4f4;border:1px solid #5c5c5c;box-sizing:border-box;border-radius:3px"></div>
<div class="t" style="left:429.04px;top:181px;transform:scaleX(0.9901);transform-origin:0px 0;">Do not search system directories (-nostdinc)</div>
<div class="r" style="left:413px;top:203px;width:13px;height:13px;background:#f4f4f4;border:1px solid #5c5c5c;box-sizing:border-box;border-radius:3px"></div>
<div class="t" style="left:429.04px;top:202px;transform:scaleX(0.9573);transform-origin:0px 0;">Preprocess only (-E)</div>
<div class="r" style="left:413px;top:223px;width:458px;height:250px;background:#f0f0f0;border:1px solid #a4a7ad;box-sizing:border-box"></div>
<div class="r" style="left:414px;top:224px;width:456px;height:1px;background:#fff"></div>
<div class="r" style="left:414px;top:224px;width:1px;height:27px;background:#fff"></div>
<div class="r" style="left:414px;top:251px;width:456px;height:1px;background:#fff"></div>
<div class="r" style="left:414px;top:252px;width:456px;height:1px;background:#8c9096"></div>
<div class="r" style="left:414px;top:253px;width:456px;height:219px;background:#fff"></div>
<div class="t" style="left:421.15px;top:228px;transform:scaleX(0.9852);transform-origin:0px 0;">Defined symbols (-D)</div>
<div class="r" style="left:415px;top:374px;width:454px;height:15px;background:#0078d7"></div>
<div class="t" style="left:417.67px;top:254px;transform:scaleX(0.7973);transform-origin:-1px 0;">__REDLIB__</div>
<div class="t" style="left:417.37px;top:269px;transform:scaleX(0.9071);transform-origin:0px 0;">CPU_MIMXRT1186CVJ8C</div>
<div class="t" style="left:417.37px;top:284px;transform:scaleX(0.9106);transform-origin:0px 0;">CPU_MIMXRT1186CVJ8C_cm33</div>
<div class="t" style="left:416.67px;top:299px;transform:scaleX(0.8661);transform-origin:0px 0;">MCUXPRESSO_SDK</div>
<div class="t" style="left:417.37px;top:314px;transform:scaleX(0.8740);transform-origin:0px 0;">XIP_EXTERNAL_FLASH=1</div>
<div class="t" style="left:416.67px;top:329px;transform:scaleX(0.8813);transform-origin:0px 0;">SDK_DEBUGCONSOLE=1</div>
<div class="t" style="left:416.67px;top:344px;transform:scaleX(0.9161);transform-origin:0px 0;">MCUX_META_BUILD</div>
<div class="t" style="left:416.67px;top:359px;transform:scaleX(0.8896);transform-origin:0px 0;">MIMXRT1186_cm33_SERIES</div>
<div class="t" style="left:417.30px;top:374px;transform:scaleX(0.8784);transform-origin:0px 0;color:#fff;">XIP_BOOT_HEADER_ENABLE=0</div>
<div class="t" style="left:417.37px;top:389px;transform:scaleX(0.8456);transform-origin:0px 0;">CR_INTEGER_PRINTF</div>
<div class="t" style="left:416.67px;top:404px;transform:scaleX(0.8938);transform-origin:0px 0;">PRINTF_FLOAT_ENABLE=0</div>
<div class="t" style="left:417.67px;top:419px;transform:scaleX(0.8483);transform-origin:-1px 0;">__MCUXPRESSO</div>
<div class="t" style="left:417.67px;top:434px;transform:scaleX(0.8223);transform-origin:-1px 0;">__USE_CMSIS</div>
<div class="t" style="left:416.67px;top:449px;transform:scaleX(0.8560);transform-origin:0px 0;">DEBUG</div>
<svg class="r" style="left:757px;top:228px" width="16" height="16" viewBox="0 0 16 16"><path d="M4.5 0.5 L11 0.5 L14.5 4 L14.5 14.5 L4.5 14.5 Z" fill="#f8fbff" stroke="#b89a52"/><path d="M11 0.5 L11 4 L14.5 4 Z" fill="#e6cc88"/><path d="M7 3.5 L12.5 3.5" stroke="#7a9cc6" stroke-width="1"/><path d="M7 5.5 L12.5 5.5" stroke="#7a9cc6" stroke-width="1"/><path d="M7 7.5 L12.5 7.5" stroke="#7a9cc6" stroke-width="1"/><path d="M7 9.5 L12.5 9.5" stroke="#7a9cc6" stroke-width="1"/><path d="M7 11.5 L12.5 11.5" stroke="#7a9cc6" stroke-width="1"/><path d="M4 5 L4 13 M0 9 L8 9" stroke="#1a7a1a" stroke-width="3.4"/><path d="M4 6 L4 12 M1 9 L7 9" stroke="#5cc85c" stroke-width="1.3"/></svg>
<svg class="r" style="left:780px;top:228px" width="16" height="16" viewBox="0 0 16 16"><path d="M4.5 0.5 L11 0.5 L14.5 4 L14.5 14.5 L4.5 14.5 Z" fill="#f8fbff" stroke="#b89a52"/><path d="M11 0.5 L11 4 L14.5 4 Z" fill="#e6cc88"/><path d="M7 3.5 L12.5 3.5" stroke="#7a9cc6" stroke-width="1"/><path d="M7 5.5 L12.5 5.5" stroke="#7a9cc6" stroke-width="1"/><path d="M7 7.5 L12.5 7.5" stroke="#7a9cc6" stroke-width="1"/><path d="M7 9.5 L12.5 9.5" stroke="#7a9cc6" stroke-width="1"/><path d="M7 11.5 L12.5 11.5" stroke="#7a9cc6" stroke-width="1"/><path d="M1.2 5.8 L6.8 12.2 M6.8 5.8 L1.2 12.2" stroke="#e03040" stroke-width="2.8"/></svg>
<svg class="r" style="left:803px;top:228px" width="16" height="16" viewBox="0 0 16 16"><path d="M4.5 0.5 L11 0.5 L14.5 4 L14.5 14.5 L4.5 14.5 Z" fill="#f8fbff" stroke="#b89a52"/><path d="M11 0.5 L11 4 L14.5 4 Z" fill="#e6cc88"/><path d="M7 3.5 L12.5 3.5" stroke="#7a9cc6" stroke-width="1"/><path d="M7 5.5 L12.5 5.5" stroke="#7a9cc6" stroke-width="1"/><path d="M7 7.5 L12.5 7.5" stroke="#7a9cc6" stroke-width="1"/><path d="M7 9.5 L12.5 9.5" stroke="#7a9cc6" stroke-width="1"/><path d="M7 11.5 L12.5 11.5" stroke="#7a9cc6" stroke-width="1"/><path d="M2.5 5.2 L4 3.8 L10.6 10.6 L10.2 12.6 L8.2 12.2 Z" fill="#e8cf8a" stroke="#8a7030" stroke-width="0.8" stroke-linejoin="round"/><path d="M8.6 11.2 L10.2 12.6 L9.6 10.4 Z" fill="#203060"/></svg>
<svg class="r" style="left:826px;top:228px" width="16" height="16" viewBox="0 0 16 16"><path d="M14.5 1 L14.5 12.5" stroke="#a8b0bc"/><path d="M2 2.5 L9.5 2.5" stroke="#3a70b8" stroke-width="1.2"/><path d="M9.5 4.5 L13 4.5 M9.5 6.5 L13 6.5 M9.5 8.5 L13 8.5 M9.5 10.5 L13 10.5" stroke="#b8c8dc"/><path d="M5.5 3.8 L10 8.5 L7.5 8.5 L7.5 15.3 L3.5 15.3 L3.5 8.5 L1 8.5 Z" fill="#fbd24e" stroke="#c48a10" stroke-width="0.9" stroke-linejoin="round"/></svg>
<svg class="r" style="left:849px;top:228px" width="16" height="16" viewBox="0 0 16 16"><path d="M14 3 L14 14.5" stroke="#a8b0bc"/><path d="M1.5 14.5 L10 14.5" stroke="#3a70b8" stroke-width="1.2"/><path d="M9.5 5.5 L13 5.5 M9.5 7.5 L13 7.5 M9.5 9.5 L13 9.5 M9.5 11.5 L13 11.5" stroke="#b8c8dc"/><path d="M3 0.8 L7 0.8 L7 6.5 L9.5 6.5 L5 11.6 L0.5 6.5 L3 6.5 Z" fill="#fbd24e" stroke="#c48a10" stroke-width="0.9" stroke-linejoin="round"/></svg>
<div class="r" style="left:413px;top:478px;width:458px;height:251px;background:#f0f0f0;border:1px solid #a4a7ad;box-sizing:border-box"></div>
<div class="r" style="left:414px;top:479px;width:456px;height:1px;background:#fff"></div>
<div class="r" style="left:414px;top:479px;width:1px;height:27px;background:#fff"></div>
<div class="r" style="left:414px;top:506px;width:456px;height:1px;background:#fff"></div>
<div class="r" style="left:414px;top:507px;width:456px;height:1px;background:#8c9096"></div>
<div class="r" style="left:414px;top:508px;width:456px;height:220px;background:#fff"></div>
<div class="t" style="left:420.91px;top:483px;">Undefined symbols (-U)</div>
<svg class="r" style="left:757px;top:483px" width="16" height="16" viewBox="0 0 16 16"><path d="M4.5 0.5 L11 0.5 L14.5 4 L14.5 14.5 L4.5 14.5 Z" fill="#f8fbff" stroke="#b89a52"/><path d="M11 0.5 L11 4 L14.5 4 Z" fill="#e6cc88"/><path d="M7 3.5 L12.5 3.5" stroke="#7a9cc6" stroke-width="1"/><path d="M7 5.5 L12.5 5.5" stroke="#7a9cc6" stroke-width="1"/><path d="M7 7.5 L12.5 7.5" stroke="#7a9cc6" stroke-width="1"/><path d="M7 9.5 L12.5 9.5" stroke="#7a9cc6" stroke-width="1"/><path d="M7 11.5 L12.5 11.5" stroke="#7a9cc6" stroke-width="1"/><path d="M4 5 L4 13 M0 9 L8 9" stroke="#1a7a1a" stroke-width="3.4"/><path d="M4 6 L4 12 M1 9 L7 9" stroke="#5cc85c" stroke-width="1.3"/></svg>
<svg class="r" style="left:780px;top:483px" width="16" height="16" viewBox="0 0 16 16"><path d="M4.5 0.5 L11 0.5 L14.5 4 L14.5 14.5 L4.5 14.5 Z" fill="#f8fbff" stroke="#9a9a9a"/><path d="M7 3.5 L12.5 3.5" stroke="#a8a8a8" stroke-width="1"/><path d="M7 5.5 L12.5 5.5" stroke="#a8a8a8" stroke-width="1"/><path d="M1.2 5.8 L6.8 12.2 M6.8 5.8 L1.2 12.2" stroke="#8c8c8c" stroke-width="2.4"/><path d="M9 12.5 L11 12.5" stroke="#8c8c8c"/></svg>
<svg class="r" style="left:803px;top:483px" width="16" height="16" viewBox="0 0 16 16"><path d="M4.5 0.5 L11 0.5 L14.5 4 L14.5 14.5 L4.5 14.5 Z" fill="#f8fbff" stroke="#9a9a9a"/><path d="M7 3.5 L12.5 3.5" stroke="#a8a8a8" stroke-width="1"/><path d="M7 5.5 L12.5 5.5" stroke="#a8a8a8" stroke-width="1"/><path d="M2.5 5.2 L4 3.8 L10.6 10.6 L10.2 12.6 L8.2 12.2 Z" fill="#e4e4e4" stroke="#8c8c8c" stroke-width="0.9" stroke-linejoin="round"/></svg>
<svg class="r" style="left:826px;top:483px" width="16" height="16" viewBox="0 0 16 16"><path d="M14.5 1 L14.5 12.5" stroke="#8c8c8c"/><path d="M2 2.5 L4 2.5 M6.5 2.5 L9 2.5" stroke="#9a9a9a"/><path d="M5.5 3.8 L10 8.5 L7.5 8.5 L7.5 15.3 L3.5 15.3 L3.5 8.5 L1 8.5 Z" fill="#f4f4f4" stroke="#8c8c8c" stroke-width="0.9" stroke-linejoin="round"/></svg>
<svg class="r" style="left:849px;top:483px" width="16" height="16" viewBox="0 0 16 16"><path d="M14 3 L14 14.5" stroke="#8c8c8c"/><path d="M1.5 14.5 L3.5 14.5 M6 14.5 L9 14.5" stroke="#9a9a9a"/><path d="M3 0.8 L7 0.8 L7 6.5 L9.5 6.5 L5 11.6 L0.5 6.5 L3 6.5 Z" fill="#f4f4f4" stroke="#8c8c8c" stroke-width="0.9" stroke-linejoin="round"/></svg>
<div class="t" style="left:643.17px;top:325px;font-size:16px;transform:scaleX(0.9652);transform-origin:0px 0;color:#e8202a;">For RAW image</div>
<svg class="r" style="left:630px;top:330px" width="60" height="60" viewBox="630 330 60 60"><path d="M669.8 342 L645 372.8" stroke="#e81c24" stroke-width="3.6" stroke-linecap="round"/></svg>
<div class="r" style="left:696px;top:747px;width:95px;height:23px;background:#fdfdfd;border:1px solid #d0d0d0;box-sizing:border-box;border-radius:3px"></div><div class="t" style="left:701.04px;top:751px;transform:scaleX(0.9478);transform-origin:0px 0;">Restore Defaults</div>
<div class="r" style="left:798px;top:747px;width:90px;height:23px;background:#fdfdfd;border:1px solid #d0d0d0;box-sizing:border-box;border-radius:3px"></div><div class="t" style="left:827.13px;top:751px;transform:scaleX(1.0167);transform-origin:0px 0;">Apply</div>
<div class="r" style="left:0px;top:776px;width:892px;height:1px;background:#a0a0a0"></div>
<div class="r" style="left:0px;top:777px;width:892px;height:52px;background:#f0f0f0"></div>
<div class="r" style="left:0px;top:777px;width:892px;height:1px;background:#ffffff"></div>
<svg class="r" style="left:13px;top:791px" width="22" height="22" viewBox="0 0 22 22"><defs><linearGradient id="hg" x1="0" y1="0" x2="0" y2="1"><stop offset="0" stop-color="#fbfbfb"/><stop offset="1" stop-color="#e2e2e2"/></linearGradient></defs><circle cx="11" cy="11" r="9.8" fill="url(#hg)" stroke="#4d5d7e" stroke-width="1.1"/><path d="M7.4 8.4 C7.4 4.6 14.6 4.6 14.6 8.2 C14.6 10.8 11.2 10.9 11.2 13.8" fill="none" stroke="#3d5a85" stroke-width="2.4"/><circle cx="11.2" cy="16.4" r="1.4" fill="#3d5a85"/></svg>
<div class="r" style="left:682px;top:792px;width:96px;height:23px;background:#fdfdfd;border:1px solid #0a72cc;box-shadow:inset 0 0 0 0.4px #0a72cc;box-sizing:border-box;border-radius:3px"></div><div class="t" style="left:687.37px;top:796px;transform:scaleX(0.9798);transform-origin:0px 0;">Apply and Close</div>
<div class="r" style="left:786px;top:792px;width:96px;height:23px;background:#fdfdfd;border:1px solid #d0d0d0;box-sizing:border-box;border-radius:3px"></div><div class="t" style="left:816.00px;top:796px;transform:scaleX(0.9730);transform-origin:0px 0;">Cancel</div>
<svg class="r" style="left:0;top:825px" width="6" height="4"><path d="M0 0 Q0 4 5 4 L0 4 Z" fill="#1a2040"/></svg>
<svg class="r" style="left:886px;top:825px" width="6" height="4"><path d="M6 0 Q6 4 1 4 L6 4 Z" fill="#1a2040"/></svg>
</body></html>
